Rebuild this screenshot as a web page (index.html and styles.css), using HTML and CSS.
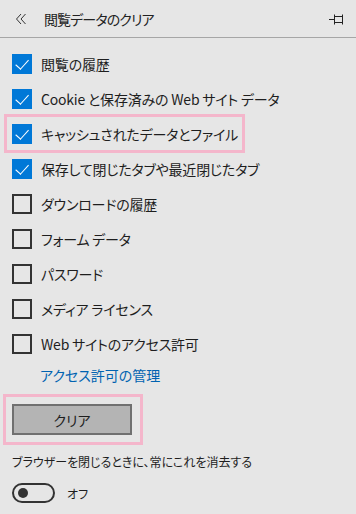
FILE: index.html
```html
<!DOCTYPE html>
<html lang="ja">
<head>
  <meta charset="UTF-8" />
  <title>閲覧データのクリア</title>
  <link rel="stylesheet" href="styles.css">
</head>
<body>
  <header class="panel-head">
    <svg class="back" width="12" height="12" viewBox="0 0 12 12">
      <polyline points="6,1 1.5,6 6,11" fill="none" stroke="#333" stroke-width="1"/>
      <polyline points="10.5,1 6,6 10.5,11" fill="none" stroke="#333" stroke-width="1"/>
    </svg>
    <span class="title">閲覧データのクリア</span>
    <svg class="pin" width="17" height="12" viewBox="0 0 17 12">
      <path d="M0 6.5H5M5.5 1.5V11.5M5.5 3.5H13.5V9.5H5.5M13.5 1.5V11.5" fill="none" stroke="#222" stroke-width="1"/>
    </svg>
  </header>

  <main class="options">
    <label class="row"><span class="box checked"></span>閲覧の履歴</label>
    <label class="row"><span class="box checked"></span>Cookie と保存済みの Web サイト データ</label>
    <label class="row marked"><span class="box checked"></span>キャッシュされたデータとファイル</label>
    <label class="row"><span class="box checked"></span>保存して閉じたタブや最近閉じたタブ</label>
    <label class="row"><span class="box"></span>ダウンロードの履歴</label>
    <label class="row"><span class="box"></span>フォーム データ</label>
    <label class="row"><span class="box"></span>パスワード</label>
    <label class="row"><span class="box"></span>メディア ライセンス</label>
    <label class="row"><span class="box"></span>Web サイトのアクセス許可</label>
    <a class="manage" href="#">アクセス許可の管理</a>

    <div class="clear-wrap">
      <button class="clear-btn">クリア</button>
    </div>

    <p class="always">ブラウザーを閉じるときに、常にこれを消去する</p>
    <div class="toggle-row">
      <span class="toggle"><span class="knob"></span></span>
      <span class="toggle-label">オフ</span>
    </div>
  </main>
</body>
</html>
```

FILE: styles.css
```css
* {
  box-sizing: border-box;
  margin: 0;
  padding: 0;
}

body {
  background: #e6e6e6;
  color: #1e1e1e;
  font-family: "Noto Sans CJK JP", "Noto Sans", sans-serif;
  font-feature-settings: "palt";
  font-size: 14px;
  width: 356px;
  height: 514px;
  overflow: hidden;
}

.panel-head {
  height: 38px;
  display: flex;
  align-items: center;
  padding: 0 10px 0 15px;
  border-bottom: 1px solid #a6a6a6;
}

.back {
  margin-right: 17px;
}

.title {
  flex: 1;
  font-size: 14px;
  letter-spacing: -0.9px;
  color: #222;
}

.options {
  padding-top: 8px;
  display: flex;
  flex-direction: column;
}

.row {
  height: 35px;
  display: flex;
  align-items: center;
  padding-left: 12px;
  font-size: 14px;
  letter-spacing: -0.2px;
  white-space: nowrap;
  color: #1e1e1e;
}

.row.marked {
  width: 237px;
  margin-left: 6px;
  padding-left: 6px;
  outline: 3px solid #f4b6cb;
  outline-offset: -1px;
}

.box {
  width: 20px;
  height: 20px;
  border: 2px solid #333;
  margin-right: 9px;
  flex-shrink: 0;
  position: relative;
}

.box.checked {
  background: #0078d7;
  border-color: #0078d7;
}

.box.checked::after {
  content: "";
  position: absolute;
  left: 3px;
  top: 1px;
  width: 11px;
  height: 6px;
  border-left: 1.5px solid #fff;
  border-bottom: 1.5px solid #fff;
  transform: translate(0, 3px) rotate(-48deg) scale(1.05, 1);
  transform-origin: 40% 60%;
}

.manage {
  display: block;
  margin: 2px 0 0 40px;
  color: #0063b1;
  text-decoration: none;
  font-size: 14px;
  height: 24px;
  line-height: 24px;
}

.clear-wrap {
  margin: 7px 0 0 3px;
  width: 140px;
  border: 3px solid #f4b6cb;
  padding: 7px 8px 7px 6px;
}

.clear-btn {
  display: block;
  width: 120px;
  height: 31px;
  background: #b4b4b4;
  border: 2px solid #707070;
  font-family: inherit;
  font-feature-settings: "palt";
  font-size: 14px;
  color: #1e1e1e;
}

.always {
  margin: 6px 0 0 12px;
  font-size: 12px;
  height: 22px;
  line-height: 22px;
}

.toggle-row {
  margin: 10px 0 0 12px;
  display: flex;
  align-items: center;
}

.toggle {
  width: 43px;
  height: 20px;
  border: 2px solid #333;
  border-radius: 10px;
  position: relative;
}

.knob {
  position: absolute;
  left: 4px;
  top: 3px;
  width: 10px;
  height: 10px;
  border-radius: 50%;
  background: #333;
}

.toggle-label {
  margin-left: 12px;
  font-size: 12px;
}
```
